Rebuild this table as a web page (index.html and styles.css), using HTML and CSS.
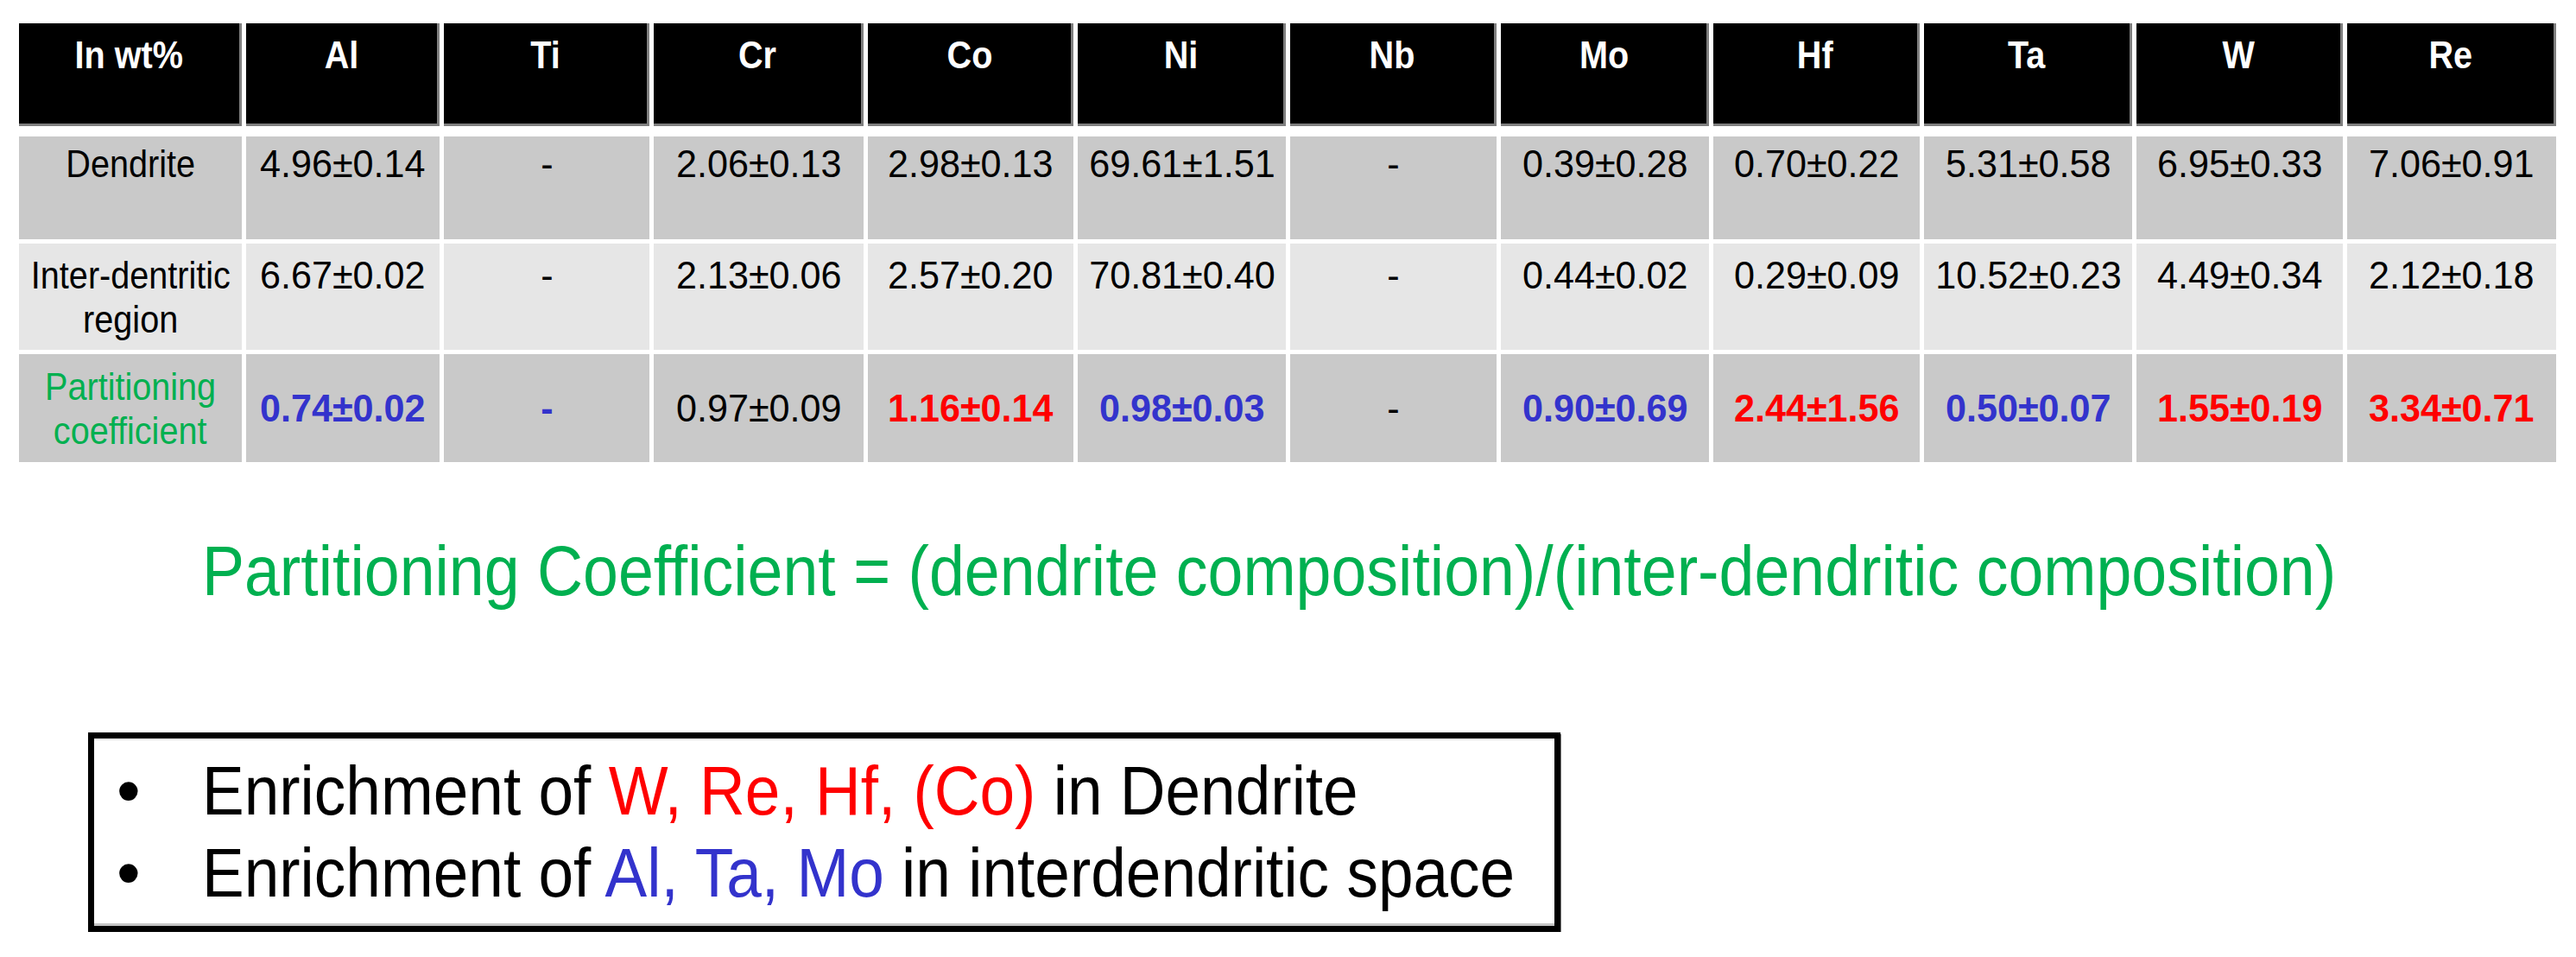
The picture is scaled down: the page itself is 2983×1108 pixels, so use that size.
FILE: index.html
```html
<!DOCTYPE html>
<html lang="en">
<head>
<meta charset="utf-8">
<title>Partitioning coefficients</title>
<link rel="stylesheet" href="styles.css">
</head>
<body>
<main class="sheet">
  <div class="grid">
    <div class="row head">
      <div class="th"><span class="w">In wt%</span></div>
      <div class="th"><span class="w">Al</span></div>
      <div class="th"><span class="w">Ti</span></div>
      <div class="th"><span class="w">Cr</span></div>
      <div class="th"><span class="w">Co</span></div>
      <div class="th"><span class="w">Ni</span></div>
      <div class="th"><span class="w">Nb</span></div>
      <div class="th"><span class="w">Mo</span></div>
      <div class="th"><span class="w">Hf</span></div>
      <div class="th"><span class="w">Ta</span></div>
      <div class="th"><span class="w">W</span></div>
      <div class="th"><span class="w">Re</span></div>
    </div>
    <div class="row row-d">
      <div class="c"><span class="w">Dendrite</span></div>
      <div class="c"><span class="n">4.96±0.14</span></div>
      <div class="c"><span class="n">-</span></div>
      <div class="c"><span class="n">2.06±0.13</span></div>
      <div class="c"><span class="n">2.98±0.13</span></div>
      <div class="c"><span class="n">69.61±1.51</span></div>
      <div class="c"><span class="n">-</span></div>
      <div class="c"><span class="n">0.39±0.28</span></div>
      <div class="c"><span class="n">0.70±0.22</span></div>
      <div class="c"><span class="n">5.31±0.58</span></div>
      <div class="c"><span class="n">6.95±0.33</span></div>
      <div class="c"><span class="n">7.06±0.91</span></div>
    </div>
    <div class="row row-i">
      <div class="c"><span class="w">Inter-dentritic</span><span class="w">region</span></div>
      <div class="c"><span class="n">6.67±0.02</span></div>
      <div class="c"><span class="n">-</span></div>
      <div class="c"><span class="n">2.13±0.06</span></div>
      <div class="c"><span class="n">2.57±0.20</span></div>
      <div class="c"><span class="n">70.81±0.40</span></div>
      <div class="c"><span class="n">-</span></div>
      <div class="c"><span class="n">0.44±0.02</span></div>
      <div class="c"><span class="n">0.29±0.09</span></div>
      <div class="c"><span class="n">10.52±0.23</span></div>
      <div class="c"><span class="n">4.49±0.34</span></div>
      <div class="c"><span class="n">2.12±0.18</span></div>
    </div>
    <div class="row row-p">
      <div class="c green"><span class="w">Partitioning</span><span class="w">coefficient</span></div>
      <div class="c"><span class="n b blue">0.74±0.02</span></div>
      <div class="c"><span class="n b blue">-</span></div>
      <div class="c"><span class="n">0.97±0.09</span></div>
      <div class="c"><span class="n b red">1.16±0.14</span></div>
      <div class="c"><span class="n b blue">0.98±0.03</span></div>
      <div class="c"><span class="n">-</span></div>
      <div class="c"><span class="n b blue">0.90±0.69</span></div>
      <div class="c"><span class="n b red">2.44±1.56</span></div>
      <div class="c"><span class="n b blue">0.50±0.07</span></div>
      <div class="c"><span class="n b red">1.55±0.19</span></div>
      <div class="c"><span class="n b red">3.34±0.71</span></div>
    </div>
  </div>

  <p class="formula"><span class="fw">Partitioning Coefficient = (dendrite composition)/(inter-dendritic composition)</span></p>

  <div class="note">
    <ul class="list">
      <li class="li"><span class="bullet">•</span><span class="lt">Enrichment of <span class="red">W, Re, Hf, (Co)</span> in Dendrite</span></li>
      <li class="li"><span class="bullet">•</span><span class="lt">Enrichment of <span class="blue">Al, Ta, Mo</span> in interdendritic space</span></li>
    </ul>
  </div>
</main>
</body>
</html>
```

FILE: styles.css
```css
* { box-sizing: border-box; }

html, body {
  margin: 0;
  padding: 0;
  background: #ffffff;
}

body {
  font-family: "Liberation Sans", Arial, sans-serif;
  color: #000;
}

.sheet {
  padding: 27px 0 0 22px;
  width: 2983px;
}

.grid {
  display: grid;
  grid-template-columns: 258px 224px 238px 243px 238px 241px 239px 241px 239px 241px 239px 242px;
  column-gap: 5px;
  row-gap: 5px;
  width: 2938px;
}

.row { display: contents; }

.th {
  height: 119px;
  margin-bottom: 7px;
  background: #000;
  border-right: 3px solid #7f7f7f;
  border-bottom: 3px solid #7f7f7f;
  color: #fff;
  font-weight: bold;
  font-size: 45px;
  line-height: 54px;
  padding-top: 10px;
  display: flex;
  justify-content: center;
  align-items: flex-start;
}

.c {
  display: flex;
  flex-direction: column;
  align-items: center;
  font-size: 44px;
  line-height: 51px;
  white-space: nowrap;
}

.row-d .c {
  height: 119px;
  background: #c9c9c9;
  padding-top: 6px;
}

.row-i .c {
  height: 123px;
  background: #e6e6e6;
  padding-top: 11px;
}

.row-p .c {
  height: 125px;
  background: #c9c9c9;
  justify-content: center;
}

.w {
  display: inline-block;
  white-space: nowrap;
  transform: scaleX(0.9);
}

.th .w { transform: scaleX(0.88); }

.n {
  display: inline-block;
  white-space: nowrap;
  transform: scaleX(0.98);
}

.b { font-weight: bold; }
.red { color: #ff0000; }
.blue { color: #3333cc; }
.green { color: #00b050; }

.formula {
  margin: 86px 0 0 212px;
  font-size: 81px;
  line-height: 81px;
  color: #00b050;
  white-space: nowrap;
}

.fw {
  display: inline-block;
  transform: scaleX(0.907);
  transform-origin: left center;
}

.note {
  margin: 146px 0 0 80px;
  width: 1705px;
  height: 231px;
  border: 7px solid #000;
  box-shadow: 1px 2px 0 #7a7a7a, inset 0 2px 0 #e2e2e2, inset 0 -3px 0 #c4c4c4;
  padding: 13px 0 14px 26px;
  background: #fff;
}

.list {
  list-style: none;
  margin: 0;
  padding: 0;
}

.li {
  display: flex;
  font-size: 79px;
  line-height: 95px;
  white-space: nowrap;
}

.bullet {
  width: 99px;
  flex: none;
}

.lt {
  display: inline-block;
  transform: scaleX(0.924);
  transform-origin: left center;
}
```
